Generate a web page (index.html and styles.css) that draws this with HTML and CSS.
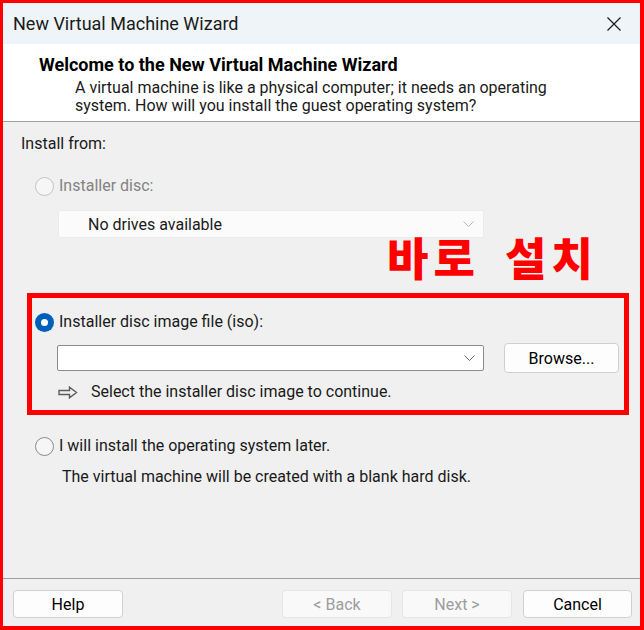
FILE: index.html
```html
<!DOCTYPE html>
<html lang="en">
<head>
<meta charset="utf-8">
<title>New Virtual Machine Wizard</title>
<link rel="stylesheet" href="styles.css">
</head>
<body>
<div class="frame">
  <div class="titlebar">
    <span class="title">New Virtual Machine Wizard</span>
    <svg class="close" width="14" height="14" viewBox="0 0 14 14"><path d="M0.5 0.5 L13.5 13.5 M13.5 0.5 L0.5 13.5" stroke="#1b1b1b" stroke-width="1.2" fill="none"/></svg>
  </div>
  <div class="header">
    <div class="h-title">Welcome to the New Virtual Machine Wizard</div>
    <div class="h-desc">A virtual machine is like a physical computer; it needs an operating<br>system. How will you install the guest operating system?</div>
  </div>
  <div class="content">
    <div class="label">Install from:</div>
    <div class="radio-row disabled r1">
      <span class="radio off-dis"></span><span>Installer disc:</span>
    </div>
    <div class="select dis">
      <span>No drives available</span>
      <svg class="chev" width="11" height="6" viewBox="0 0 11 6"><path d="M0.5 0.5 L5.5 5.5 L10.5 0.5" stroke="#b8b8b8" stroke-width="1" fill="none"/></svg>
    </div>
    <div class="radio-row r2">
      <span class="radio on"></span><span>Installer disc image file (iso):</span>
    </div>
    <div class="iso-row">
      <div class="select iso">
        <span></span>
        <svg class="chev" width="11" height="6" viewBox="0 0 11 6"><path d="M0.5 0.5 L5.5 5.5 L10.5 0.5" stroke="#6a6a6a" stroke-width="1" fill="none"/></svg>
      </div>
      <div class="btn browse">Browse...</div>
    </div>
    <div class="hint">
      <svg class="arrow" width="20" height="13" viewBox="0 0 20 13"><path d="M1 4.5 H11.5 V1.2 L18.5 6.5 L11.5 11.8 V8.5 H1 Z" stroke="#5c5c5c" stroke-width="1.4" fill="none" stroke-linejoin="miter"/></svg>
      <span>Select the installer disc image to continue.</span>
    </div>
    <div class="radio-row r3">
      <span class="radio off"></span><span>I will install the operating system later.</span>
    </div>
    <div class="note">The virtual machine will be created with a blank hard disk.</div>

    <div class="mark-box"></div>
    <div class="mark-text">바로 설치</div>
  </div>
  <div class="footer">
    <div class="btn help">Help</div>
    <div class="spacer"></div>
    <div class="btn dis-btn">&lt; Back</div>
    <div class="btn dis-btn next">Next &gt;</div>
    <div class="btn cancel">Cancel</div>
  </div>
</div>
</body>
</html>
```

FILE: styles.css
```css
* { box-sizing: border-box; }
html, body { margin: 0; padding: 0; }
body {
  width: 644px;
  height: 630px;
  font-family: Roboto, "Liberation Sans", sans-serif;
  font-size: 16px;
  color: #1a1a1a;
  background: #ff0000;
}
.frame {
  width: 644px;
  height: 630px;
  border-style: solid;
  border-color: #ff0000;
  border-width: 3px 4px 4px 3px;
  display: flex;
  flex-direction: column;
  background: #f0f0f0;
}
.titlebar {
  height: 41px;
  background: #eef4f7;
  display: flex;
  align-items: center;
  padding: 0 19px 0 10px;
  flex: none;
}
.title {
  font-size: 18px;
  color: #1b1b1b;
  flex: 1;
}
.close { display: block; }
.header {
  background: #ffffff;
  height: 78px;
  border-bottom: 1px solid #a0a0a0;
  padding: 11px 0 0 36px;
  flex: none;
}
.h-title {
  font-weight: 700;
  font-size: 18px;
  line-height: 20px;
  color: #000;
}
.h-desc {
  margin-top: 4px;
  margin-left: 36px;
  line-height: 18px;
  color: #1a1a1a;
}
.content {
  flex: 1;
  position: relative;
  padding-top: 12px;
  border-bottom: 1px solid #a0a0a0;
}
.label {
  line-height: 20px;
  margin-left: 18px;
}
.radio-row {
  display: flex;
  align-items: center;
  height: 20px;
  line-height: 20px;
  margin-left: 32px;
}
.radio-row .radio { margin-right: 5px; }
.r1 { margin-top: 22px; }
.r2 { margin-top: 74px; }
.r3 { margin-top: 34px; }
.disabled { color: #838383; }
.radio {
  width: 19px;
  height: 19px;
  border-radius: 50%;
  flex: none;
  display: inline-block;
}
.off-dis { border: 1px solid #c4c4c4; background: #f6f6f6; }
.off { border: 1px solid #8a8a8a; background: #f6f6f6; }
.on {
  background: #005fb8;
  position: relative;
}
.on::after {
  content: "";
  position: absolute;
  left: 6px;
  top: 6px;
  width: 7px;
  height: 7px;
  border-radius: 50%;
  background: #fff;
}
.select {
  display: flex;
  align-items: center;
  justify-content: space-between;
}
.select.dis {
  margin-top: 14px;
  margin-left: 55px;
  width: 426px;
  height: 28px;
  background: #fbfbfb;
  border: 1px solid #ececec;
  padding: 0 9px 0 29px;
  color: #1a1a1a;
}
.iso-row {
  display: flex;
  align-items: center;
  margin-top: 11px;
  margin-left: 54px;
  gap: 20px;
}
.select.iso {
  width: 427px;
  height: 26px;
  background: #ffffff;
  border: 1px solid #8c8c8c;
  border-radius: 2px;
  padding: 0 8px 0 8px;
}
.btn {
  height: 28px;
  width: 110px;
  border: 1px solid #d0d0d0;
  border-radius: 4px;
  background: #fdfdfd;
  display: flex;
  align-items: center;
  justify-content: center;
  color: #000;
  flex: none;
}
.browse { width: 115px; height: 30px; }
.hint {
  display: flex;
  align-items: center;
  margin-top: 9px;
  margin-left: 55px;
  height: 20px;
  line-height: 20px;
}
.arrow { margin-right: 13px; display: block; }
.note {
  margin-top: 11px;
  margin-left: 59px;
  line-height: 20px;
}
.mark-box {
  position: absolute;
  left: 24px;
  top: 171px;
  width: 602px;
  height: 122px;
  border: 5px solid #ff0000;
}
.mark-text {
  position: absolute;
  left: 384px;
  top: 107px;
  font-family: "Noto Sans CJK KR", sans-serif;
  font-weight: 900;
  font-size: 45px;
  line-height: 56px;
  letter-spacing: 5px;
  word-spacing: 10px;
  color: #ff0000;
}
.footer {
  height: 47px;
  flex: none;
  display: flex;
  padding: 11px 8px 0 10px;
}
.spacer { flex: 1; }
.dis-btn {
  background: #f9f9f9;
  border-color: #e6e6e6;
  color: #9d9d9d;
  margin-right: 10px;
}
.next { margin-right: 11px; }
.cancel { width: 109px; }
```
